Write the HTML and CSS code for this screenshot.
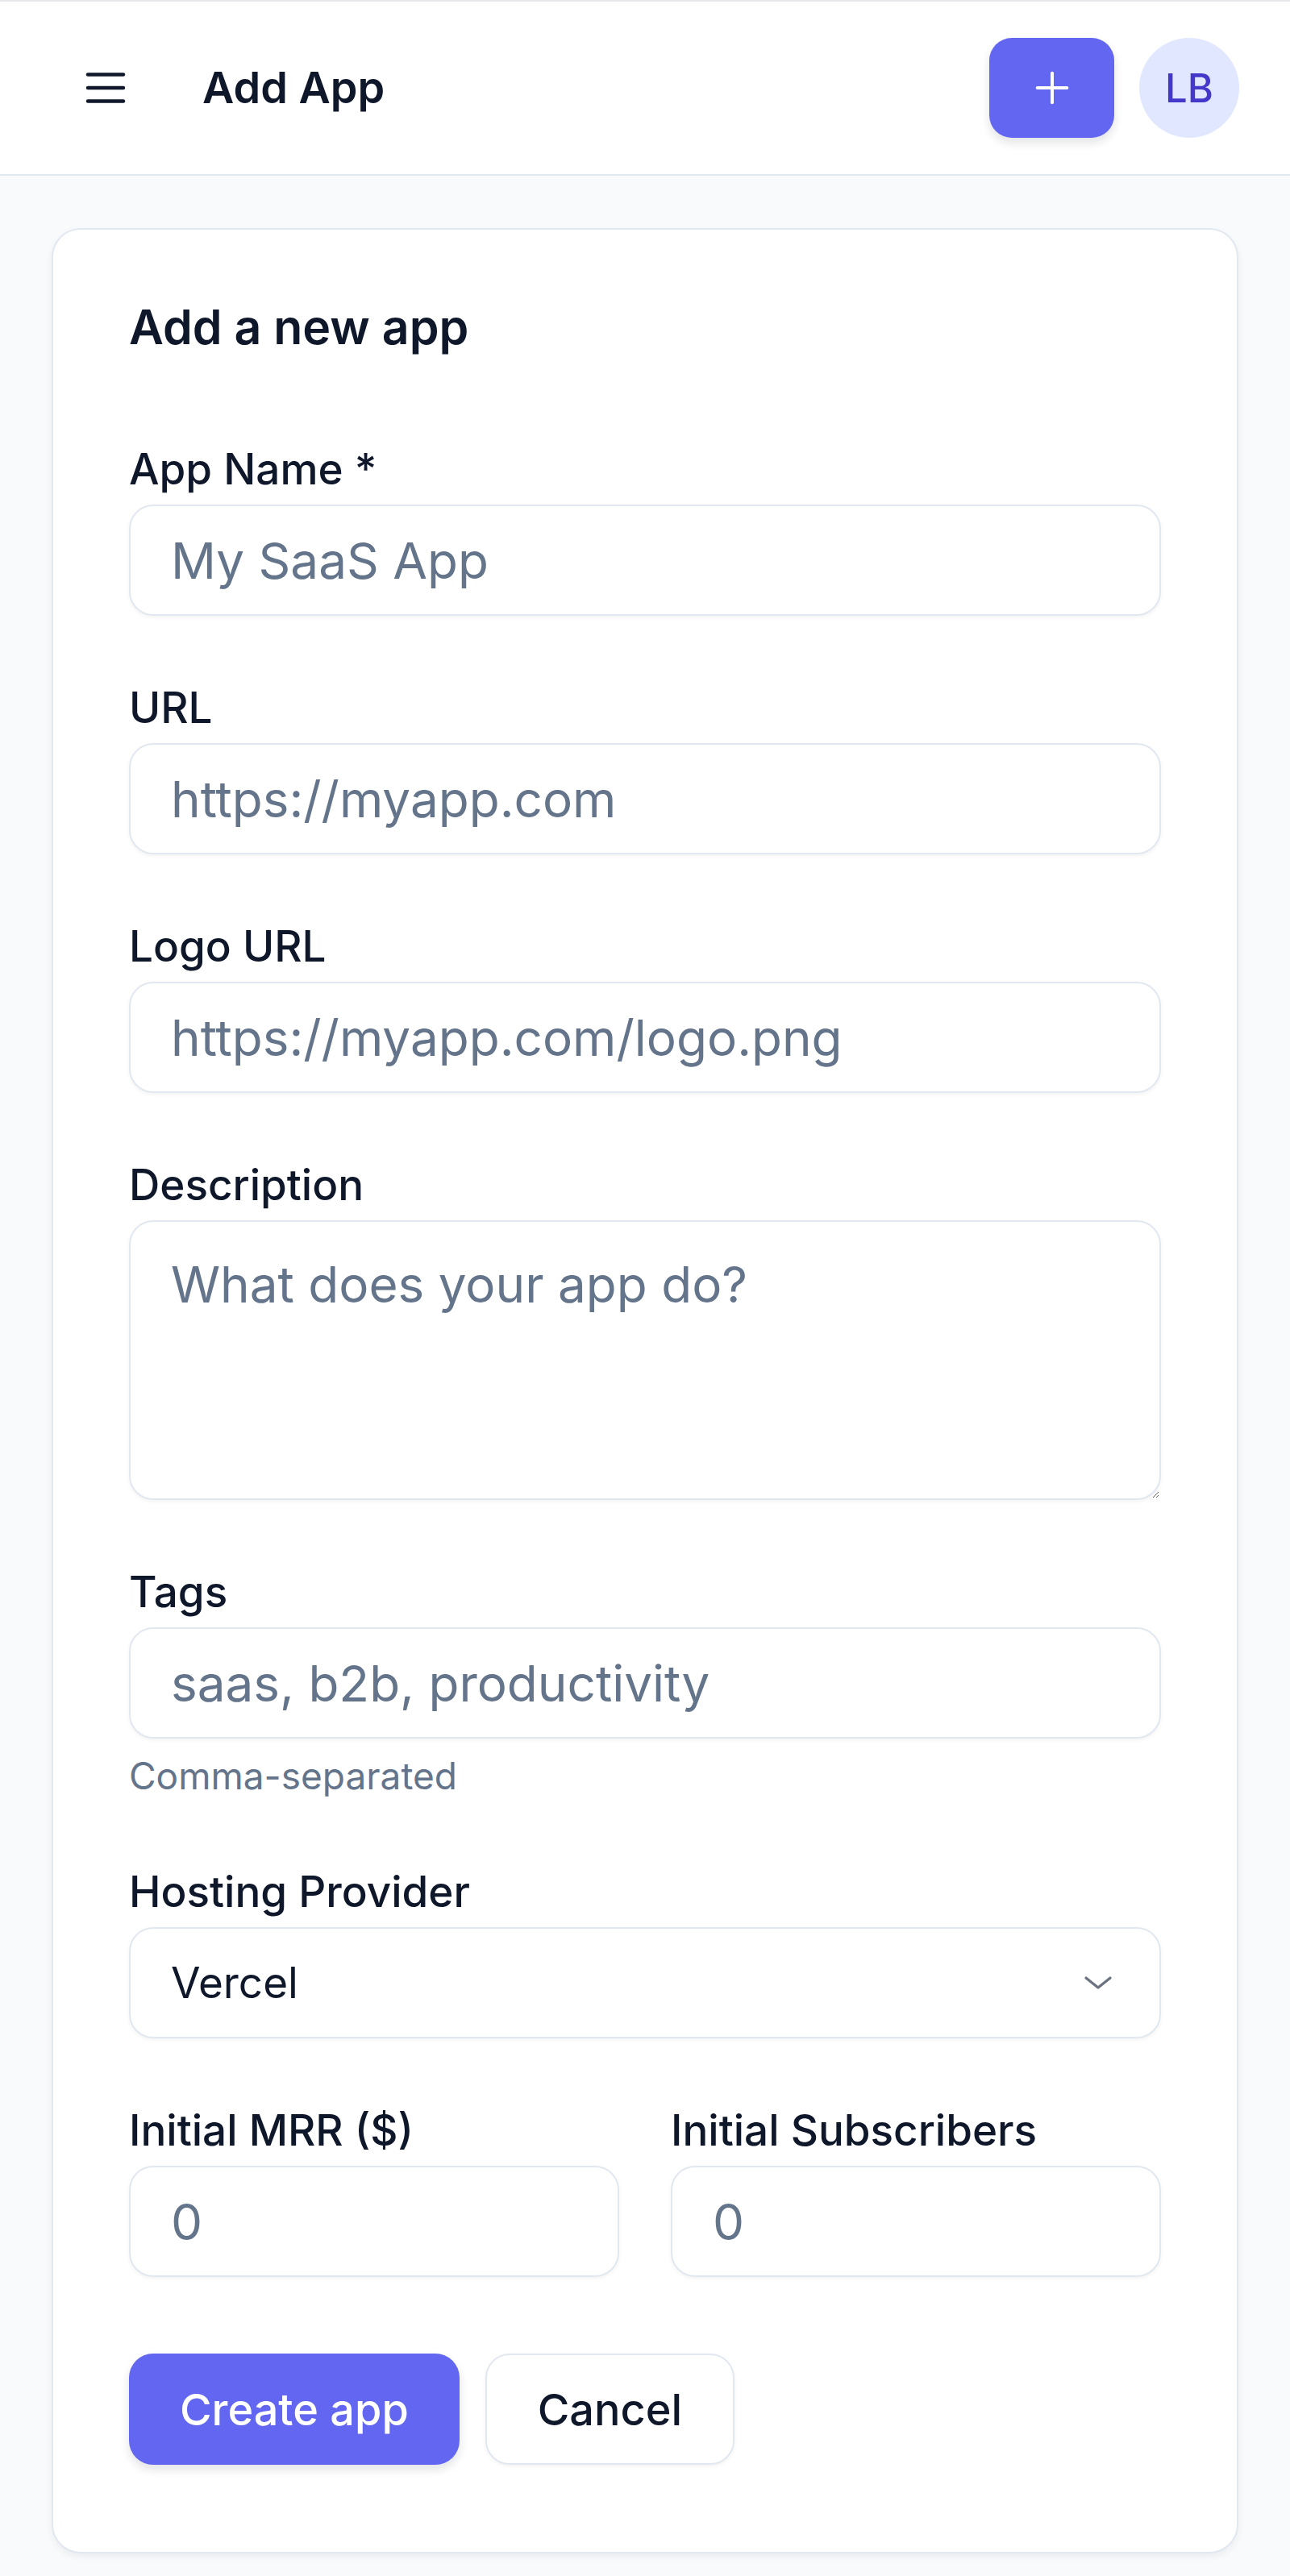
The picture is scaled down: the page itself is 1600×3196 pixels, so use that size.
FILE: index.html
```html
<!DOCTYPE html>
<html lang="en">
<head>
    <meta charset="UTF-8">
    <meta name="viewport" content="width=device-width, initial-scale=1.0">
    <title>Add App</title>
    <link rel="stylesheet" href="styles.css">
</head>
<body>
    <header class="topbar">
        <div class="topbar-left">
            <button class="menu-btn" aria-label="Open menu">
                <svg viewBox="0 0 24 24" fill="none" stroke="currentColor" stroke-width="1.6" stroke-linecap="round">
                    <line x1="4" y1="6" x2="20" y2="6"/>
                    <line x1="4" y1="12" x2="20" y2="12"/>
                    <line x1="4" y1="18" x2="20" y2="18"/>
                </svg>
            </button>
            <h1 class="page-title">Add App</h1>
        </div>
        <div class="topbar-right">
            <button class="add-btn" aria-label="Add app">
                <svg viewBox="0 0 24 24" fill="none" stroke="currentColor" stroke-width="2.2" stroke-linecap="round">
                    <line x1="12" y1="2" x2="12" y2="22"/>
                    <line x1="2" y1="12" x2="22" y2="12"/>
                </svg>
            </button>
            <div class="avatar">LB</div>
        </div>
    </header>

    <main class="content">
        <section class="card">
            <h2 class="card-title">Add a new app</h2>
            <form class="app-form">
                <div class="field">
                    <label for="name">App Name *</label>
                    <input id="name" type="text" placeholder="My SaaS App">
                </div>
                <div class="field">
                    <label for="url">URL</label>
                    <input id="url" type="text" placeholder="https://myapp.com">
                </div>
                <div class="field">
                    <label for="logo">Logo URL</label>
                    <input id="logo" type="text" placeholder="https://myapp.com/logo.png">
                </div>
                <div class="field">
                    <label for="desc">Description</label>
                    <textarea id="desc" placeholder="What does your app do?"></textarea>
                </div>
                <div class="field">
                    <label for="tags">Tags</label>
                    <input id="tags" type="text" placeholder="saas, b2b, productivity">
                    <p class="hint">Comma-separated</p>
                </div>
                <div class="field">
                    <label for="host">Hosting Provider</label>
                    <div class="select-wrap">
                        <select id="host">
                            <option>Vercel</option>
                            <option>Netlify</option>
                            <option>AWS</option>
                            <option>Other</option>
                        </select>
                        <svg class="chevron" viewBox="0 0 24 12" fill="none" stroke="currentColor" stroke-width="2.2" stroke-linecap="round" stroke-linejoin="round">
                            <polyline points="2,2 12,10 22,2"/>
                        </svg>
                    </div>
                </div>
                <div class="field-row">
                    <div class="field">
                        <label for="mrr">Initial MRR ($)</label>
                        <input id="mrr" type="number" placeholder="0">
                    </div>
                    <div class="field">
                        <label for="subs">Initial Subscribers</label>
                        <input id="subs" type="number" placeholder="0">
                    </div>
                </div>
                <div class="actions">
                    <button type="submit" class="btn btn-primary">Create app</button>
                    <button type="button" class="btn btn-secondary">Cancel</button>
                </div>
            </form>
        </section>
    </main>
</body>
</html>
```

FILE: styles.css
```css
* {
    box-sizing: border-box;
}

body {
    margin: 0;
    background: #f8fafc;
    font-family: 'Inter', 'Noto Sans', sans-serif;
    color: #0f172a;
}

button {
    font-family: inherit;
    cursor: pointer;
}

/* top bar */
.topbar {
    height: 218px;
    display: flex;
    justify-content: space-between;
    align-items: center;
    padding: 0 63px 0 98px;
    background: #fff;
    border-top: 2px solid #e5e7eb;
    border-bottom: 2px solid #e2e8f0;
}

.topbar-left,
.topbar-right {
    display: flex;
    align-items: center;
}

.menu-btn {
    width: 66px;
    height: 66px;
    padding: 0;
    border: none;
    background: none;
    color: #0f172a;
}

.menu-btn svg {
    width: 66px;
    height: 66px;
    display: block;
}

.page-title {
    margin: 0 0 0 87px;
    font-size: 54px;
    font-weight: 600;
    line-height: 1.3;
}

.add-btn {
    width: 155px;
    height: 124px;
    border: none;
    border-radius: 28px;
    background: #6366f1;
    color: #fff;
    display: flex;
    justify-content: center;
    align-items: center;
    box-shadow: 0 6px 12px rgba(15, 23, 42, 0.12);
}

.add-btn svg {
    width: 44px;
    height: 44px;
}

.avatar {
    width: 124px;
    height: 124px;
    margin-left: 31px;
    border-radius: 50%;
    background: #e0e7ff;
    color: #4338ca;
    font-size: 49px;
    font-weight: 500;
    display: flex;
    justify-content: center;
    align-items: center;
}

/* card */
.content {
    padding: 65px 64px 40px;
}

.card {
    background: #fff;
    border: 2px solid #e2e8f0;
    border-radius: 36px;
    padding: 81px 94px 108px;
    box-shadow: 0 4px 10px rgba(15, 23, 42, 0.06);
}

.card-title {
    margin: 0 0 100px;
    font-size: 59px;
    font-weight: 600;
    line-height: 80px;
}

.app-form {
    display: flex;
    flex-direction: column;
    gap: 78px;
}

.field {
    display: flex;
    flex-direction: column;
    gap: 8px;
}

.field label {
    font-size: 53px;
    font-weight: 500;
    line-height: 72px;
}

.field input,
.field textarea,
.field select {
    width: 100%;
    height: 138px;
    padding: 0 50px;
    border: 2px solid #e2e8f0;
    border-radius: 30px;
    background: #fff;
    font-family: inherit;
    font-size: 62px;
    color: #0f172a;
    box-shadow: 0 2px 5px rgba(15, 23, 42, 0.05);
    outline: none;
}

.field input::placeholder,
.field textarea::placeholder {
    color: #64748b;
}

.field input[type=number] {
    -moz-appearance: textfield;
}

.field input::-webkit-outer-spin-button,
.field input::-webkit-inner-spin-button {
    -webkit-appearance: none;
    margin: 0;
}

.field textarea {
    height: 347px;
    padding: 31px 50px;
    line-height: 1.5;
    resize: vertical;
}

.hint {
    margin: 8px 0 0;
    font-size: 46px;
    line-height: 60px;
    color: #64748b;
}

.select-wrap {
    position: relative;
}

.field select {
    appearance: none;
    -webkit-appearance: none;
    font-size: 53px;
}

.chevron {
    position: absolute;
    right: 60px;
    top: 50%;
    width: 36px;
    height: 18px;
    margin-top: -9px;
    color: #6b7280;
    pointer-events: none;
}

.field-row {
    display: grid;
    grid-template-columns: 1fr 1fr;
    gap: 64px;
}

.actions {
    display: flex;
    gap: 32px;
    margin-top: 17px;
}

.btn {
    height: 138px;
    padding: 0 63px;
    border-radius: 30px;
    font-size: 54px;
    font-weight: 500;
}

.btn-primary {
    border: none;
    background: #6366f1;
    color: #fff;
    box-shadow: 0 6px 12px rgba(15, 23, 42, 0.12);
}

.btn-secondary {
    border: 2px solid #e2e8f0;
    background: #fff;
    color: #0f172a;
    box-shadow: 0 2px 5px rgba(15, 23, 42, 0.05);
}
```
